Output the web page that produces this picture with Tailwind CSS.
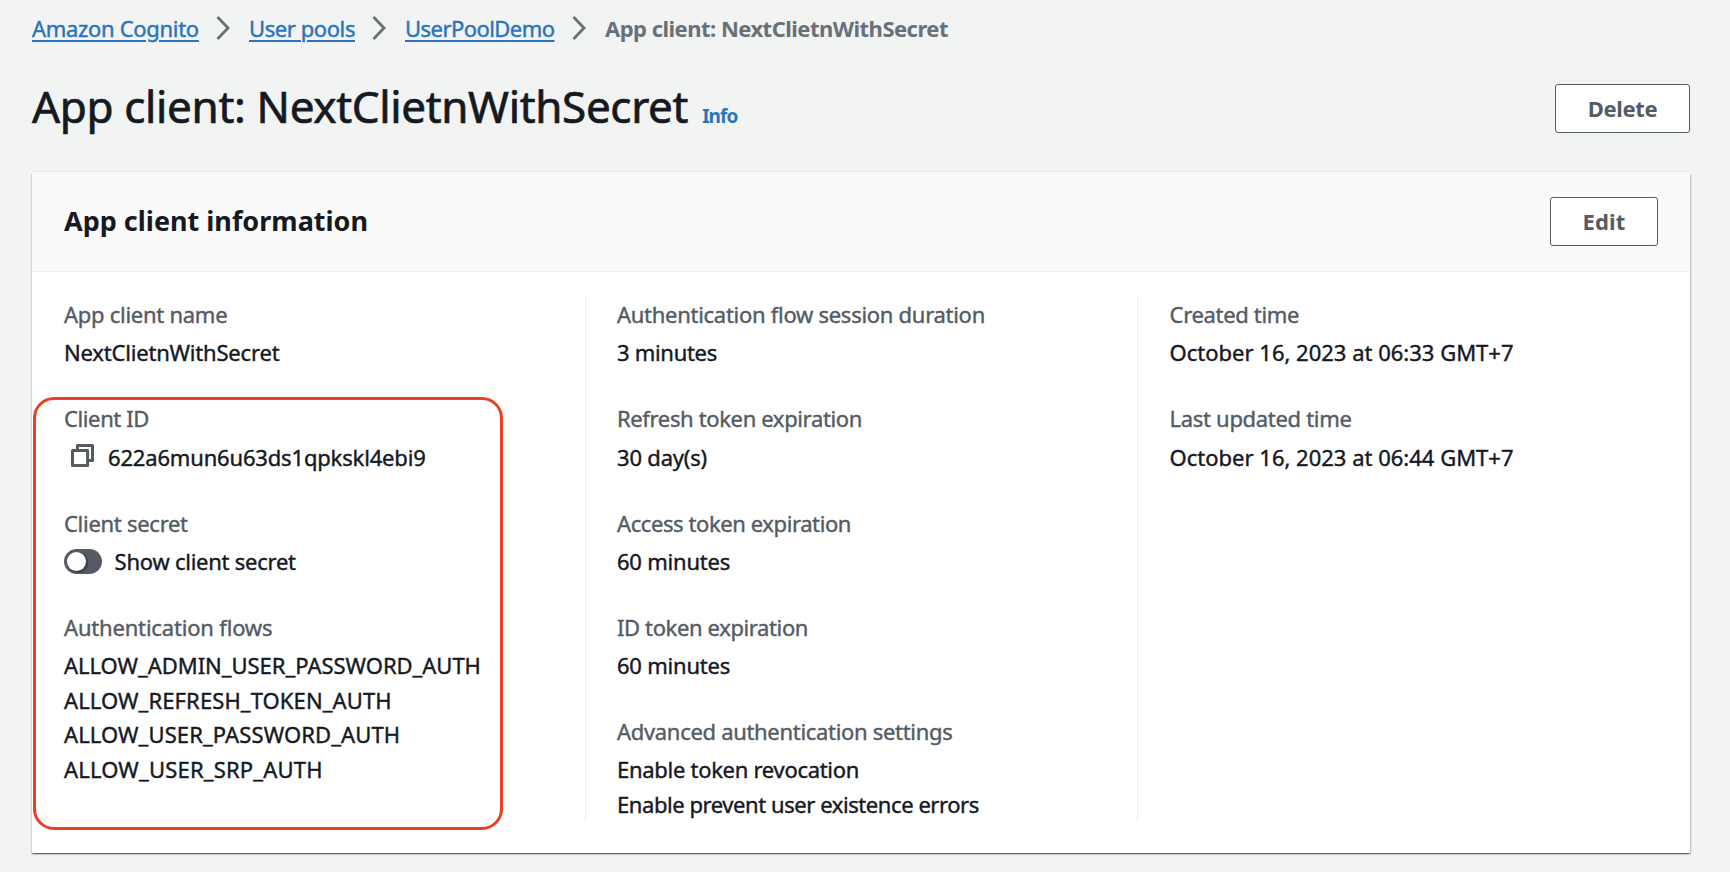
<!DOCTYPE html>
<html lang="en">
<head>
<meta charset="utf-8">
<title>App client: NextClietnWithSecret</title>
<script src="https://cdn.jsdelivr.net/npm/@tailwindcss/browser@4"></script>
</head>
<body class="h-[872px] overflow-hidden bg-[#f2f4f4] font-['Noto_Sans',sans-serif] text-[22px] leading-[34.6px] text-[#16191f] [font-variant-ligatures:none] whitespace-nowrap">
<main class="pl-8 pr-10 pt-[11px]">
  <nav class="flex h-[34px] items-center">
    <a class="w-[167px] tracking-[-0.31px] text-[#2b74bb] underline decoration-2 underline-offset-[3px] [-webkit-text-stroke:0.45px]">Amazon Cognito</a>
    <svg class="ml-[17px] mr-[19px] h-6 w-3.5" viewBox="0 0 14 24" fill="none" stroke="#687078" stroke-width="2.8"><path d="M1.5 1 L12 12 L1.5 23"/></svg>
    <a class="w-[106px] tracking-[-0.42px] text-[#2b74bb] underline decoration-2 underline-offset-[3px] [-webkit-text-stroke:0.45px]">User pools</a>
    <svg class="ml-[17px] mr-[19px] h-6 w-3.5" viewBox="0 0 14 24" fill="none" stroke="#687078" stroke-width="2.8"><path d="M1.5 1 L12 12 L1.5 23"/></svg>
    <a class="w-[149.5px] tracking-[-0.55px] text-[#2b74bb] underline decoration-2 underline-offset-[3px] [-webkit-text-stroke:0.45px]">UserPoolDemo</a>
    <svg class="ml-[17px] mr-[19.5px] h-6 w-3.5" viewBox="0 0 14 24" fill="none" stroke="#687078" stroke-width="2.8"><path d="M1.5 1 L12 12 L1.5 23"/></svg>
    <span class="font-bold tracking-[-0.52px] text-[#687078]">App client: NextClietnWithSecret</span>
  </nav>

  <header class="mt-[31px] flex h-[60px] items-start justify-between">
    <div class="flex items-baseline">
      <h1 class="text-[44px] leading-[60px] tracking-[-0.34px] [-webkit-text-stroke:0.7px]">App client: NextClietnWithSecret</h1>
      <a class="ml-[14px] text-[19px] leading-[26px] font-bold tracking-[-0.9px] text-[#2b74bb]">Info</a>
    </div>
    <button class="mt-2 flex h-[49px] w-[135px] items-center justify-center rounded-[3px] border border-[#545b64] bg-white font-bold tracking-[-0.35px] text-[#545b64]">Delete</button>
  </header>

  <section class="mt-9 h-[681px] w-[1658px] bg-white shadow-[0_1.5px_1.5px_0_rgba(0,28,36,0.3),1.5px_1.5px_1.5px_0_rgba(0,28,36,0.15),-1.5px_1.5px_1.5px_0_rgba(0,28,36,0.15),0_1px_0_0_rgba(0,28,36,0.25),0_-1px_0_0_#eaeded]">
    <div class="flex h-[100px] items-center justify-between border-b border-[#eaeded] bg-[#fafafa] px-8">
      <h2 class="text-[27px] font-bold">App client information</h2>
      <button class="flex h-[49px] w-[108px] items-center justify-center rounded-[3px] border border-[#545b64] bg-white font-bold tracking-[0.1px] text-[#545b64]">Edit</button>
    </div>

    <div class="relative mt-[25.3px] grid h-[524px] grid-cols-[553px_552px_553px] [-webkit-text-stroke:0.4px]">
      <div class="flex flex-col gap-[31.5px] pl-8">
        <dl class="flex flex-col gap-[3.5px]"><dt class="tracking-[-0.27px] text-[#545b64]">App client name</dt><dd class="tracking-[-0.19px]">NextClietnWithSecret</dd></dl>
        <dl class="flex flex-col gap-[3.5px]"><dt class="tracking-[-0.38px] text-[#545b64]">Client ID</dt>
          <dd class="flex items-center pl-[7px] tracking-[-0.17px]">
            <svg class="-mt-0.5 mr-[14px] h-[23px] w-[23px]" viewBox="0 0 23 23" fill="none" stroke="#545b64" stroke-width="3" stroke-linejoin="round"><path d="M6.4 5 V1.5 H21.5 V16.6 H18"/><rect x="1.5" y="6.4" width="15.1" height="15.1"/></svg>
            622a6mun6u63ds1qpkskl4ebi9</dd></dl>
        <dl class="flex flex-col gap-[3.5px]"><dt class="tracking-[-0.28px] text-[#545b64]">Client secret</dt>
          <dd class="flex items-center tracking-[-0.25px]">
            <span class="mr-[12.6px] flex h-[25px] w-[38px] items-center rounded-full bg-[#545b64] pl-[3px]"><span class="h-[19px] w-[19px] rounded-full bg-white shadow-[1.5px_1px_0_1px_rgba(0,0,0,0.25)]"></span></span>
            Show client secret</dd></dl>
        <dl class="flex flex-col gap-[3.5px]"><dt class="tracking-[-0.18px] text-[#545b64]">Authentication flows</dt>
          <dd><p class="tracking-[-0.03px]">ALLOW_ADMIN_USER_PASSWORD_AUTH</p><p class="tracking-[0.1px]">ALLOW_REFRESH_TOKEN_AUTH</p><p class="tracking-[0.1px]">ALLOW_USER_PASSWORD_AUTH</p><p class="tracking-[0.18px]">ALLOW_USER_SRP_AUTH</p></dd></dl>
      </div>

      <div class="flex flex-col gap-[31.5px] border-l border-[#eaeded] pl-[31px]">
        <dl class="flex flex-col gap-[3.5px]"><dt class="tracking-[-0.28px] text-[#545b64]">Authentication flow session duration</dt><dd class="tracking-[-0.3px]">3 minutes</dd></dl>
        <dl class="flex flex-col gap-[3.5px]"><dt class="tracking-[-0.36px] text-[#545b64]">Refresh token expiration</dt><dd class="tracking-[-0.19px]">30 day(s)</dd></dl>
        <dl class="flex flex-col gap-[3.5px]"><dt class="tracking-[-0.41px] text-[#545b64]">Access token expiration</dt><dd class="tracking-[-0.22px]">60 minutes</dd></dl>
        <dl class="flex flex-col gap-[3.5px]"><dt class="tracking-[-0.38px] text-[#545b64]">ID token expiration</dt><dd class="tracking-[-0.22px]">60 minutes</dd></dl>
        <dl class="flex flex-col gap-[3.5px]"><dt class="tracking-[-0.31px] text-[#545b64]">Advanced authentication settings</dt>
          <dd><p class="tracking-[-0.29px]">Enable token revocation</p><p class="tracking-[-0.43px]">Enable prevent user existence errors</p></dd></dl>
      </div>

      <div class="flex flex-col gap-[31.5px] border-l border-[#eaeded] pl-[31.6px]">
        <dl class="flex flex-col gap-[3.5px]"><dt class="tracking-[-0.33px] text-[#545b64]">Created time</dt><dd>October 16, 2023 at 06:33 GMT+7</dd></dl>
        <dl class="flex flex-col gap-[3.5px]"><dt class="tracking-[-0.31px] text-[#545b64]">Last updated time</dt><dd>October 16, 2023 at 06:44 GMT+7</dd></dl>
      </div>

      <!-- Highlight around the client credentials -->
      <div class="pointer-events-none absolute left-px top-[99.7px] h-[433px] w-[470px] rounded-[21px] border-3 border-[#ec4025]"></div>
    </div>
  </section>
</main>
</body>
</html>
